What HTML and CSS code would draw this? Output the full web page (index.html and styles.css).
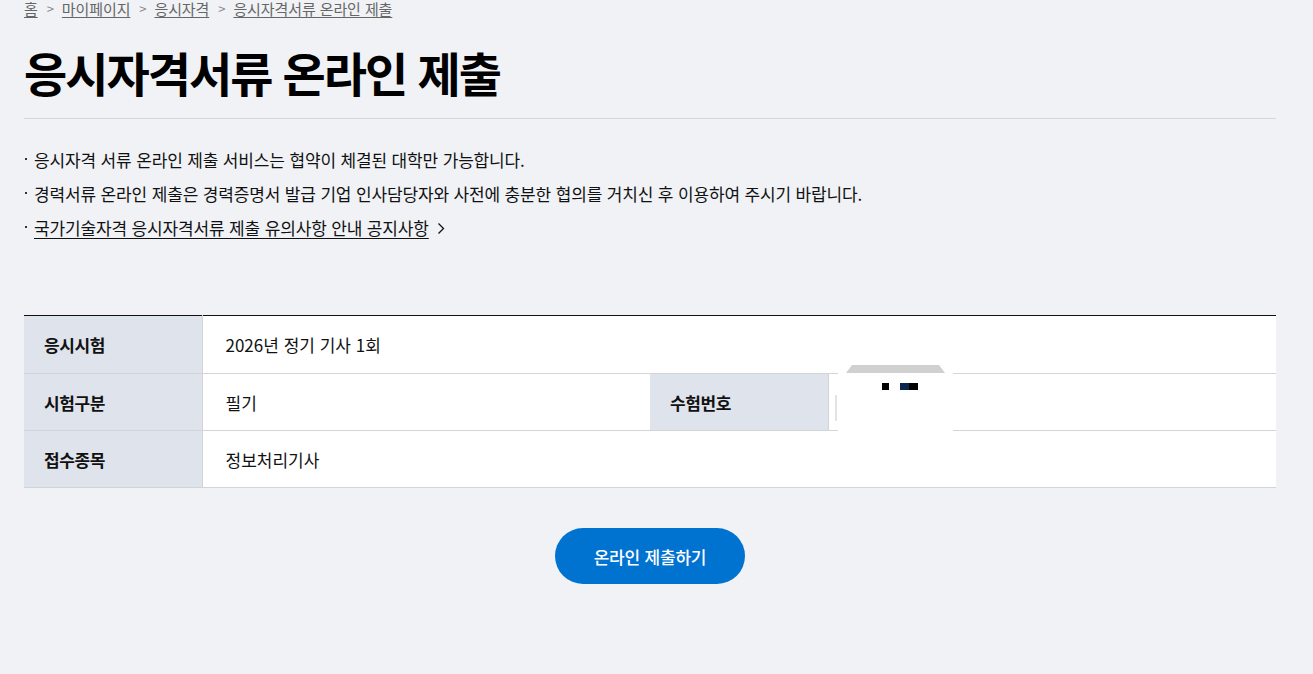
FILE: index.html
```html
<!DOCTYPE html>
<html lang="ko">
<head>
<meta charset="utf-8">
<title>응시자격서류 온라인 제출</title>
<link rel="stylesheet" href="styles.css">
</head>
<body>
<div class="page">
  <nav class="breadcrumb">
    <a href="#">홈</a><span class="sep">&gt;</span>
    <a href="#">마이페이지</a><span class="sep">&gt;</span>
    <a href="#">응시자격</a><span class="sep">&gt;</span>
    <a href="#">응시자격서류 온라인 제출</a>
  </nav>
  <h1 class="title">응시자격서류 온라인 제출</h1>
  <ul class="notes">
    <li>응시자격 서류 온라인 제출 서비스는 협약이 체결된 대학만 가능합니다.</li>
    <li>경력서류 온라인 제출은 경력증명서 발급 기업 인사담당자와 사전에 충분한 협의를 거치신 후 이용하여 주시기 바랍니다.</li>
    <li><a href="#" class="notice-link">국가기술자격 응시자격서류 제출 유의사항 안내 공지사항</a><svg class="chev" width="8" height="13" viewBox="0 0 8 13"><path d="M1.5 1.5 L6.5 6.5 L1.5 11.5" fill="none" stroke="#111" stroke-width="1.3"/></svg></li>
  </ul>
  <div class="table-wrap">
    <table class="info">
      <colgroup><col class="c-h"><col><col class="c-h"><col></colgroup>
      <tr><th>응시시험</th><td colspan="3">2026년 정기 기사 1회</td></tr>
      <tr><th>시험구분</th><td>필기</td><th>수험번호</th><td></td></tr>
      <tr><th>접수종목</th><td colspan="3">정보처리기사</td></tr>
    </table>
    <div class="redact">
      <div class="redact-tab"></div>
      <div class="redact-box">
        <span class="px px1"></span><span class="px px2"></span><span class="px px3"></span>
        <span class="redact-line"></span>
      </div>
    </div>
  </div>
  <div class="actions">
    <button class="btn-submit" type="button">온라인 제출하기</button>
  </div>
</div>
</body>
</html>
```
FILE: styles.css
```css
* { box-sizing: border-box; }
html, body { margin: 0; padding: 0; }
body {
  background: #f0f2f6;
  font-family: "Noto Sans CJK KR", "Noto Sans", sans-serif;
  color: #111;
}
.page {
  padding: 0 37px 0 24px;
}
.breadcrumb {
  display: flex;
  align-items: center;
  height: 18px;
  font-size: 15px;
  line-height: 18px;
  color: #666;
  letter-spacing: -0.1px;
}
.breadcrumb a {
  color: #666;
  text-decoration: underline;
  text-underline-offset: 2px;
}
.breadcrumb .sep {
  color: #888;
  margin: 0 8px 0 9px;
  font-size: 13px;
}
.title {
  margin: 27px 0 0;
  font-size: 47px;
  line-height: 54px;
  font-weight: 700;
  letter-spacing: -2px;
  color: #000;
  padding-bottom: 19px;
  border-bottom: 1px solid #d4d6da;
}
.notes {
  list-style: none;
  margin: 24px 0 0;
  padding: 0;
  font-size: 17px;
  line-height: 34px;
  letter-spacing: -0.15px;
}
.notes li {
  position: relative;
  padding-left: 10px;
  display: flex;
  align-items: center;
}
.notes li::before {
  content: "";
  position: absolute;
  left: 1px;
  top: 15px;
  width: 2px;
  height: 2px;
  background: #333;
}
.notice-link {
  color: #111;
  text-decoration: underline;
  text-underline-offset: 3px;
}
.chev { margin-left: 8px; }
.table-wrap {
  position: relative;
  margin-top: 70px;
}
.info {
  width: 100%;
  border-collapse: collapse;
  table-layout: fixed;
  border-top: 1px solid #111;
  background: #fff;
  font-size: 17px;
}
.info col.c-h { width: 178px; }
.info th, .info td {
  height: 57px;
  border-bottom: 1px solid #d2d4d8;
  text-align: left;
  vertical-align: middle;
  padding: 0 0 0 23px;
}
.info tr:first-child th, .info tr:first-child td { height: 58px; }
.info th {
  background: #dfe3eb;
  font-weight: 700;
  padding-left: 20px;
  border-right: 1px solid #d2d4d8;
  letter-spacing: -0.4px;
}
.info td { font-weight: 400; letter-spacing: 0; }
.redact {
  position: absolute;
  left: 814px;
  top: 50px;
  width: 115px;
}
.redact-tab {
  margin: 0 8px 0 8px;
  height: 8px;
  background: #d0d0d0;
  clip-path: polygon(6px 0, calc(100% - 6px) 0, 100% 100%, 0 100%);
}
.redact-box {
  position: relative;
  height: 64px;
  background: #fff;
}
.px {
  position: absolute;
  top: 10px;
  height: 7px;
}
.px1 { left: 44px; width: 7px; background: #000; }
.px2 { left: 62px; width: 9px; background: #0b2550; }
.px3 { left: 71px; width: 9px; background: #000; }
.redact-line {
  position: absolute;
  left: -3px;
  top: 22px;
  width: 2px;
  height: 26px;
  background: #e4e4e4;
}
.actions {
  display: flex;
  justify-content: center;
  margin-top: 40px;
}
.btn-submit {
  width: 190px;
  height: 56px;
  border: 0;
  border-radius: 28px;
  background: #0073d0;
  color: #fff;
  font-family: inherit;
  font-size: 17px;
  font-weight: 500;
  letter-spacing: -0.2px;
  cursor: pointer;
}
```
